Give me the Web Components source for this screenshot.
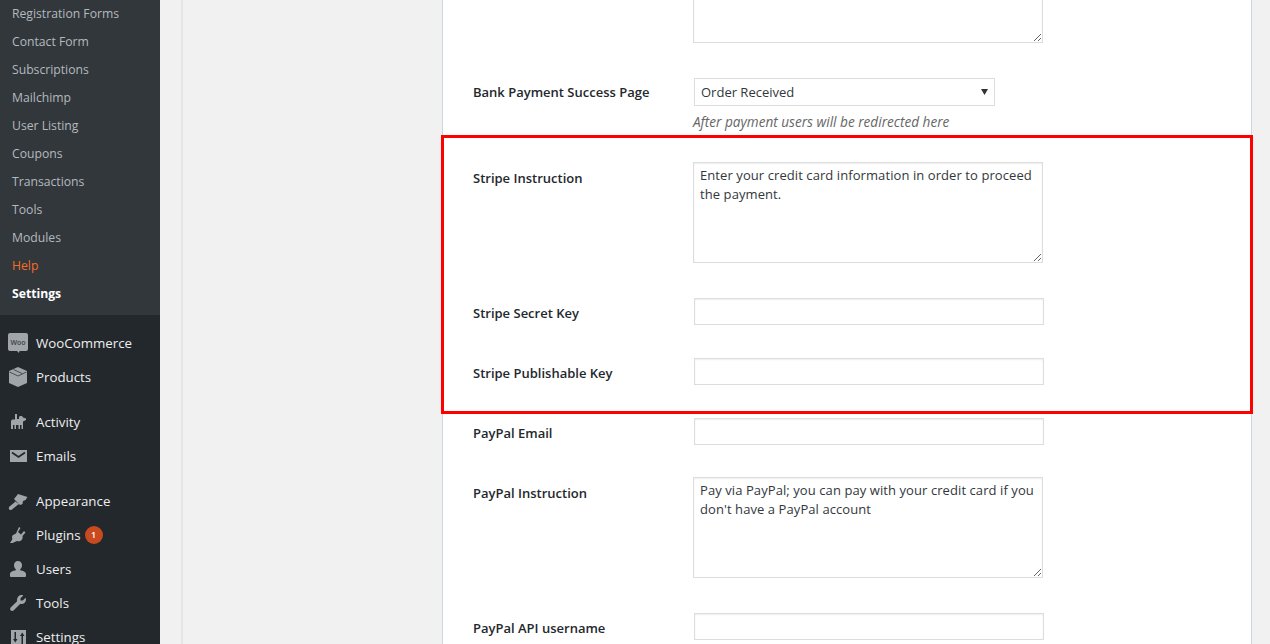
<!DOCTYPE html>
<html>
<head>
<meta charset="utf-8">
<title>Settings</title>
<style>
html, body { margin: 0; height: 644px; overflow: hidden; background: #f1f1f1; }
body { font-family: "Open Sans", "Liberation Sans", sans-serif; font-size: 13px; color: #23282d; }
</style>
</head>
<body>
<wp-shell>
  <wp-sidebar slot="side">
    <wp-submenu>
      <sub-link>Registration Forms</sub-link>
      <sub-link>Contact Form</sub-link>
      <sub-link>Subscriptions</sub-link>
      <sub-link>Mailchimp</sub-link>
      <sub-link>User Listing</sub-link>
      <sub-link>Coupons</sub-link>
      <sub-link>Transactions</sub-link>
      <sub-link>Tools</sub-link>
      <sub-link>Modules</sub-link>
      <sub-link kind="help">Help</sub-link>
      <sub-link kind="current">Settings</sub-link>
    </wp-submenu>
    <menu-sep></menu-sep>
    <menu-item icon="woo">WooCommerce</menu-item>
    <menu-item icon="box">Products</menu-item>
    <menu-sep></menu-sep>
    <menu-item icon="dog">Activity</menu-item>
    <menu-item icon="mail">Emails</menu-item>
    <menu-sep></menu-sep>
    <menu-item icon="brush">Appearance</menu-item>
    <menu-item icon="plug" badge="1">Plugins</menu-item>
    <menu-item icon="user">Users</menu-item>
    <menu-item icon="wrench">Tools</menu-item>
    <menu-item icon="sliders">Settings</menu-item>
  </wp-sidebar>

  <settings-panel>
    <form-row label=""><text-box></text-box></form-row>
    <form-row label="Bank Payment Success Page" pad="35" offset="5">
      <select-box value="Order Received"></select-box>
      <p class="note" slot="note">After payment users will be redirected here</p>
    </form-row>
    <red-box>
      <form-row label="Stripe Instruction" pad="24" offset="7"><text-box>Enter your credit card information in order to proceed the payment.</text-box></form-row>
      <form-row label="Stripe Secret Key" pad="35"><line-input></line-input></form-row>
      <form-row label="Stripe Publishable Key" pad="33"><line-input></line-input></form-row>
    </red-box>
    <form-row label="PayPal Email" pad="4"><line-input></line-input></form-row>
    <form-row label="PayPal Instruction" pad="32" offset="7"><text-box>Pay via PayPal; you can pay with your credit card if you don't have a PayPal account</text-box></form-row>
    <form-row label="PayPal API username" pad="35"><line-input></line-input></form-row>
  </settings-panel>
</wp-shell>

<script>
const ICONS = {
  woo: `<svg viewBox="0 0 20 20" width="20" height="20"><path fill="#a0a5aa" d="M2 0h16a2 2 0 0 1 2 2v14a2 2 0 0 1-2 2h-6.500l-.5 2-2-2H2a2 2 0 0 1-2-2V2a2 2 0 0 1 2-2z"/><text x="10" y="11.500" text-anchor="middle" font-family="Open Sans, sans-serif" font-size="7" font-weight="600" fill="#3b4046">Woo</text></svg>`,
  box: `<svg viewBox="0 0 20 20" width="20" height="20"><path fill="#a0a5aa" d="M10 0l9 4v12l-9 4-9-4V4z"/><path fill="none" stroke="#23282d" stroke-width=".7" d="M1.500 5L10 9l8.500-4M5.500 2.500L14 6.500"/></svg>`,
  dog: `<svg viewBox="0 0 20 20" width="20" height="20"><path fill="#a0a5aa" d="M7 2h2v5h2V5l1-1h2l1 1.500 3 1V8l-3 1.500V17h-1.500v-4H12v4h-1.500v-4H8v4H6.500v-4H5v4H3V9l1-1.500h3z"/></svg>`,
  mail: `<svg viewBox="0 0 20 20" width="20" height="20"><path fill="#a0a5aa" d="M2 4h17v12H2z"/><path fill="none" stroke="#23282d" stroke-width="1.800" d="M4 6.500l6.500 4.500L17 6.500"/></svg>`,
  brush: `<svg viewBox="0 0 20 20" width="20" height="20"><path fill="#a0a5aa" d="M10 3l9.500 3-2 3-2.500 1-.5 3-2.500 1L6 8zM6.500 10l4.500 3-1.500 1L4 18.500c-1 1-2.500.5-3-.5s0-2 .5-2.500L7 11z"/></svg>`,
  plug: `<svg viewBox="0 0 20 20" width="20" height="20"><path fill="#a0a5aa" d="M11 2l1.500 1-2.500 4 3 2.500 3-3.500L17.500 7.500l-3 3.500c.5 2-.3 3.500-1.500 4.500-1.300 1-2.800 1-4 .5L4.500 18H2l2.500-4c-.8-1.500-.5-3 .5-4l3-1.500z"/></svg>`,
  user: `<svg viewBox="0 0 20 20" width="20" height="20"><path fill="#a0a5aa" d="M10 2c2.500 0 4 2 4 4.200 0 1.800-.8 3.300-1.800 4.100v1c2.500.5 5.800 1.500 5.800 3.700v2c0 .5-.5 1-1 1H3c-.5 0-1-.5-1-1v-2c0-2.200 3.300-3.200 5.800-3.700v-1C6.800 9.500 6 8 6 6.200 6 4 7.500 2 10 2z"/></svg>`,
  wrench: `<svg viewBox="0 0 20 20" width="20" height="20"><path fill="#a0a5aa" d="M13.500 2c.7 0 1.300.1 1.800.4L12.500 5.200V7.500h2.300l2.800-2.800c.3.6.4 1.200.4 1.800 0 2.500-2 4.500-4.500 4.500-.4 0-.8 0-1.200-.2L6 17c-.9 1-2.300 1.200-3.200.4-.9-.9-.8-2.300.1-3.200l6.200-6c-.1-.5-.1-.9-.1-1.200C9 4 11 2 13.500 2z"/></svg>`,
  sliders: `<svg viewBox="0 0 20 20" width="20" height="20"><path fill="#a0a5aa" d="M3 3h15v17H3z"/><path fill="#23282d" d="M6.500 5h1.500v7h1.500l-2.200 3.500L5 12h1.500zM15 18h-1.500v-9H12l2.200-3.500L16.500 9H15z"/></svg>`
};

class WpShell extends HTMLElement {
  constructor() {
    super();
    this.attachShadow({ mode: 'open' }).innerHTML = `
      <style>
        :host { display: flex; height: 644px; overflow: hidden; }
        .side { flex: 0 0 160px; }
        .body { flex: 1; min-width: 0; padding-left: 21px; }
        .content { height: 644px; border-left: 2px solid #e5e5e5; padding-left: 259px; padding-right: 18px; overflow: hidden; }
      </style>
      <div class="side"><slot name="side"></slot></div>
      <div class="body"><div class="content"><slot></slot></div></div>`;
  }
}

class WpSidebar extends HTMLElement {
  constructor() {
    super();
    this.attachShadow({ mode: 'open' }).innerHTML = `
      <style>:host { display: block; height: 644px; background: #23282d; overflow: hidden; }</style>
      <slot></slot>`;
  }
}

class WpSubmenu extends HTMLElement {
  constructor() {
    super();
    this.attachShadow({ mode: 'open' }).innerHTML = `
      <style>:host { display: block; background: #32373c; padding-bottom: 7px; }</style>
      <slot></slot>`;
  }
}

class SubLink extends HTMLElement {
  constructor() {
    super();
    this.attachShadow({ mode: 'open' }).innerHTML = `
      <style>
        :host { display: block; height: 28px; line-height: 28px; padding-left: 12px; font-size: 12.2px; color: #b4b9be; white-space: nowrap; }
        :host([kind=help]) { color: #f56e28; }
        :host([kind=current]) { color: #fff; font-weight: 700; }
      </style>
      <slot></slot>`;
  }
}

class MenuSep extends HTMLElement {
  constructor() {
    super();
    this.attachShadow({ mode: 'open' }).innerHTML = `<style>:host { display: block; height: 11px; }</style>`;
  }
}

class MenuItem extends HTMLElement {
  constructor() {
    super();
    const badge = this.getAttribute('badge');
    this.attachShadow({ mode: 'open' }).innerHTML = `
      <style>
        :host { display: flex; align-items: center; height: 34px; font-size: 13.3px; color: #eee; white-space: nowrap; }
        .icon { flex: 0 0 36px; box-sizing: border-box; padding-left: 8px; }
        .icon svg { display: block; }
        .badge { width: 18px; height: 18px; line-height: 18px; margin-left: 4px; border-radius: 50%; background: #ca4a1f; color: #fff; font-size: 9px; font-weight: 600; text-align: center; }
      </style>
      <span class="icon">${ICONS[this.getAttribute('icon')]}</span>
      <slot></slot>
      ${badge ? `<span class="badge">${badge}</span>` : ''}`;
  }
}

class SettingsPanel extends HTMLElement {
  constructor() {
    super();
    this.attachShadow({ mode: 'open' }).innerHTML = `
      <style>
        :host { display: block; margin-top: -58px; height: 800px; width: 808px; background: #fff; border: 1px solid #ccd6e0; border-top: 0; }
      </style>
      <slot></slot>`;
  }
}

class FormRow extends HTMLElement {
  constructor() {
    super();
    const pad = this.getAttribute('pad') || 0;
    const offset = this.getAttribute('offset') || 6;
    this.attachShadow({ mode: 'open' }).innerHTML = `
      <style>
        :host { display: grid; grid-template-columns: 220px 350px; padding: ${pad}px 0 0 30px; }
        .label { font-weight: 600; font-size: 13px; color: #23282d; line-height: 18px; padding-top: ${offset}px; }
        ::slotted(.note) { margin: 7px 0 0 0; font-size: 13.6px; font-style: italic; color: #666; line-height: 18px; white-space: nowrap; }
      </style>
      <div class="label">${this.getAttribute('label')}</div>
      <div class="field"><slot></slot><slot name="note"></slot></div>`;
  }
}

class RedBox extends HTMLElement {
  constructor() {
    super();
    this.attachShadow({ mode: 'open' }).innerHTML = `
      <style>
        :host { display: block; margin: 4px 0 0 -2px; width: 806px; height: 273px; border: 3px solid #f00; background: #fff; }
        ::slotted(form-row) { margin-left: -1px; }
      </style>
      <slot></slot>`;
  }
}

class TextBox extends HTMLElement {
  constructor() {
    super();
    this.attachShadow({ mode: 'open' }).innerHTML = `
      <style>
        :host { display: block; }
        textarea { display: block; box-sizing: border-box; width: 350px; height: 101px; margin: 0; padding: 3px 6px; border: 1px solid #ddd; border-radius: 0; outline: 0; font: 13px/19px "Open Sans", "Liberation Sans", sans-serif; letter-spacing: .08px; color: #32373c; box-shadow: inset 0 1px 2px rgba(0,0,0,.07); background: #fff; }
      </style>
      <textarea></textarea>`;
    this.shadowRoot.querySelector('textarea').textContent = this.textContent;
  }
}

class LineInput extends HTMLElement {
  constructor() {
    super();
    this.attachShadow({ mode: 'open' }).innerHTML = `
      <style>
        :host { display: block; padding-left: 1px; }
        input { display: block; box-sizing: border-box; width: 350px; height: 27px; margin: 0; padding: 3px 5px; border: 1px solid #ddd; border-radius: 0; outline: 0; box-shadow: inset 0 1px 2px rgba(0,0,0,.07); background: #fff; }
      </style>
      <input type="text">`;
  }
}

class SelectBox extends HTMLElement {
  constructor() {
    super();
    this.attachShadow({ mode: 'open' }).innerHTML = `
      <style>
        :host { display: block; position: relative; width: 301px; margin-left: 1px; }
        select { display: block; box-sizing: border-box; width: 301px; height: 28px; margin: 0; padding: 2px 6px; border: 1px solid #ddd; border-radius: 0; outline: 0; appearance: none; background: #fff; font: 13px "Open Sans", "Liberation Sans", sans-serif; color: #32373c; }
        svg { position: absolute; right: 7px; top: 11px; pointer-events: none; }
      </style>
      <select><option>${this.getAttribute('value')}</option></select>
      <svg width="7" height="6" viewBox="0 0 7 6"><path fill="#333" d="M0 0h7L3.500 6z"/></svg>`;
  }
}

customElements.define('wp-shell', WpShell);
customElements.define('wp-sidebar', WpSidebar);
customElements.define('wp-submenu', WpSubmenu);
customElements.define('sub-link', SubLink);
customElements.define('menu-sep', MenuSep);
customElements.define('menu-item', MenuItem);
customElements.define('settings-panel', SettingsPanel);
customElements.define('form-row', FormRow);
customElements.define('red-box', RedBox);
customElements.define('text-box', TextBox);
customElements.define('line-input', LineInput);
customElements.define('select-box', SelectBox);
</script>
</body>
</html>
